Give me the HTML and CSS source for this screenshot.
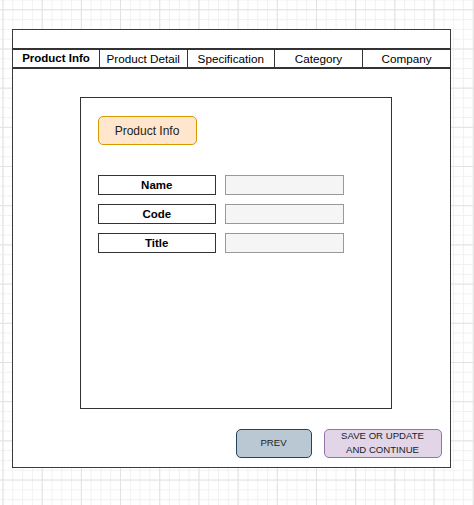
FILE: index.html
```html
<!DOCTYPE html>
<html>
<head>
<meta charset="utf-8">
<link rel="stylesheet" href="styles.css">
</head>
<body>
<div class="page">
  <div class="frame">
    <div class="tabs">
      <div class="tab active">Product Info</div>
      <div class="tab">Product Detail</div>
      <div class="tab">Specification</div>
      <div class="tab">Category</div>
      <div class="tab">Company</div>
    </div>
    <div class="panel">
      <div class="section-btn">Product Info</div>
      <div class="form">
        <div class="row"><div class="label">Name</div><div class="input"></div></div>
        <div class="row"><div class="label">Code</div><div class="input"></div></div>
        <div class="row"><div class="label">Title</div><div class="input"></div></div>
      </div>
    </div>
    <div class="actions">
      <div class="btn prev">PREV</div>
      <div class="btn save">SAVE OR UPDATE<br>AND CONTINUE</div>
    </div>
  </div>
</div>
</body>
</html>
```
FILE: styles.css
```css
html, body {
  margin: 0;
  padding: 0;
  min-height: 505px;
}
body {
  font-family: "Liberation Sans", Arial, sans-serif;
  color: #000;
  background-color: #fff;
  background-image:
    linear-gradient(to right, #e2e2e2 1px, transparent 1px),
    linear-gradient(to bottom, #e2e2e2 1px, transparent 1px),
    linear-gradient(to right, #f1f1f1 1px, transparent 1px),
    linear-gradient(to bottom, #f1f1f1 1px, transparent 1px);
  background-size: 39.2px 39.2px, 39.2px 39.2px, 9.8px 9.8px, 9.8px 9.8px;
  background-position: 2.5px 9.3px;
}
.page {
  padding: 29px 0 0 12px;
}
.frame {
  width: 439px;
  height: 439px;
  box-sizing: border-box;
  border: 1.5px solid #3a3a3a;
  background: #fff;
  padding-top: 17.5px;
  display: flex;
  flex-direction: column;
}
.tabs {
  display: grid;
  grid-template-columns: 86px 87.5px 87.5px 88px 1fr;
  height: 21px;
  box-sizing: border-box;
  border-top: 2px solid #333;
  border-bottom: 2px solid #333;
}
.tab {
  display: flex;
  align-items: center;
  justify-content: center;
  font-size: 11.7px;
  white-space: nowrap;
}
.tab + .tab {
  border-left: 1.5px solid #333;
}
.tab.active {
  font-weight: bold;
  font-size: 11.5px;
}
.panel {
  margin: 28px 0 0 67px;
  width: 312px;
  height: 312px;
  box-sizing: border-box;
  border: 1.5px solid #333;
  padding: 18.5px 0 0 16.5px;
}
.section-btn {
  width: 99px;
  height: 29px;
  box-sizing: border-box;
  border: 1px solid #d79b00;
  border-radius: 5px;
  background: #ffe6cc;
  display: flex;
  align-items: center;
  justify-content: center;
  font-size: 12px;
  color: #222;
}
.form {
  margin-top: 30px;
  display: flex;
  flex-direction: column;
  gap: 9px;
}
.row {
  display: flex;
  gap: 8.5px;
}
.label {
  width: 118.5px;
  height: 20px;
  box-sizing: border-box;
  border: 1.5px solid #333;
  display: flex;
  align-items: center;
  justify-content: center;
  font-weight: bold;
  font-size: 11.5px;
}
.input {
  width: 119px;
  height: 20px;
  box-sizing: border-box;
  border: 1px solid #999;
  background: #f5f5f5;
}
.actions {
  margin-top: 20px;
  display: flex;
  justify-content: flex-end;
  gap: 12px;
  padding-right: 8.5px;
}
.btn {
  height: 29px;
  box-sizing: border-box;
  border-radius: 5px;
  display: flex;
  align-items: center;
  justify-content: center;
  text-align: center;
  font-size: 9.6px;
  line-height: 14px;
  color: #222;
}
.prev {
  width: 76px;
  background: #bac8d3;
  border: 1px solid #23445d;
}
.save {
  width: 118px;
  background: #e1d5e7;
  border: 1px solid #9673a6;
}
```
